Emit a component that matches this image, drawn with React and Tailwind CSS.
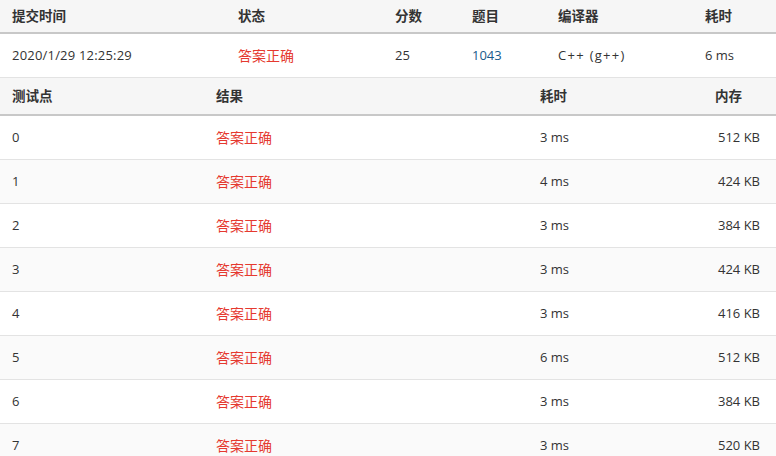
const font = {
  fontFamily: '"Open Sans", "Noto Sans CJK SC", sans-serif',
};

const tests = [
  { id: 0, time: '3 ms', mem: '512 KB' },
  { id: 1, time: '4 ms', mem: '424 KB' },
  { id: 2, time: '3 ms', mem: '384 KB' },
  { id: 3, time: '3 ms', mem: '424 KB' },
  { id: 4, time: '3 ms', mem: '416 KB' },
  { id: 5, time: '6 ms', mem: '512 KB' },
  { id: 6, time: '3 ms', mem: '384 KB' },
  { id: 7, time: '3 ms', mem: '520 KB' },
];

const App = () => {
  return (
    <div
      className="w-[776px] h-[456px] overflow-hidden bg-white text-[13px] text-[#333]"
      style={font}
    >
      {/* Submission summary */}
      <div className="flex h-[34px] items-center bg-[#f6f6f6] border-b-2 border-[#c8c8c8] font-semibold text-[13.5px]">
        <div className="w-[226px] pl-3">提交时间</div>
        <div className="w-[157px] pl-3">状态</div>
        <div className="w-[77px] pl-3">分数</div>
        <div className="w-[86px] pl-3">题目</div>
        <div className="w-[147px] pl-3">编译器</div>
        <div className="flex-1 pl-3">耗时</div>
      </div>
      <div className="flex h-[44px] items-center border-b border-[#e3e3e3]">
        <div className="w-[226px] pl-3 tracking-[0.2px]">2020/1/29 12:25:29</div>
        <div className="w-[157px] pl-3 text-[14px] text-[#e5392f]">答案正确</div>
        <div className="w-[77px] pl-3">25</div>
        <div className="w-[86px] pl-3 text-[#1a5b8c]">1043</div>
        <div className="w-[147px] pl-3 tracking-[1.3px]">C++ (g++)</div>
        <div className="flex-1 pl-3">6 ms</div>
      </div>

      {/* Test cases */}
      <div className="flex h-[38px] items-center bg-[#f6f6f6] border-b-2 border-[#c8c8c8] font-semibold text-[13.5px]">
        <div className="w-[204px] pl-3">测试点</div>
        <div className="w-[324px] pl-3">结果</div>
        <div className="w-[175px] pl-3">耗时</div>
        <div className="flex-1 pl-3">内存</div>
      </div>
      {tests.map((t) => (
        <div
          key={t.id}
          className={`flex h-[44px] items-center border-b border-[#e3e3e3] ${
            t.id % 2 === 1 ? 'bg-[#fafafa]' : 'bg-white'
          }`}
        >
          <div className="w-[204px] pl-3">{t.id}</div>
          <div className="w-[324px] pl-3 text-[14px] text-[#e5392f]">答案正确</div>
          <div className="w-[175px] pl-3">{t.time}</div>
          <div className="flex-1 pr-4 text-right">{t.mem}</div>
        </div>
      ))}
    </div>
  );
};

export default App;
